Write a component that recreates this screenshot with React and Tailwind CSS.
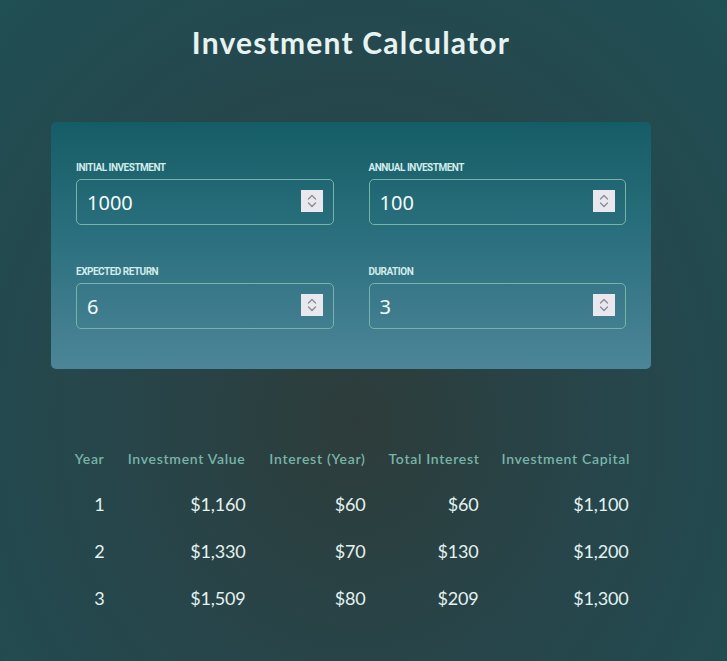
import React from "react";

const fields = [
  { id: "initial", label: "Initial Investment", value: "1000" },
  { id: "annual", label: "Annual Investment", value: "100" },
  { id: "return", label: "Expected Return", value: "6" },
  { id: "duration", label: "Duration", value: "3" },
];

const rows = [
  { year: 1, value: "$1,160", interest: "$60", total: "$60", capital: "$1,100" },
  { year: 2, value: "$1,330", interest: "$70", total: "$130", capital: "$1,200" },
  { year: 3, value: "$1,509", interest: "$80", total: "$209", capital: "$1,300" },
];

function Spinner() {
  return (
    <div className="absolute right-[11px] top-[11px] flex h-[22px] w-[22px] flex-col items-center justify-center bg-[#e9e8ee]">
      <svg width="12" height="16" viewBox="0 0 12 16" fill="none" stroke="#8d8b98" strokeWidth="1.4" strokeLinecap="round" strokeLinejoin="round">
        <path d="M2.5 6 L6 2.5 L9.5 6" />
        <path d="M2.5 10 L6 13.5 L9.5 10" />
      </svg>
    </div>
  );
}

function Field({ label, value }) {
  return (
    <div className="flex flex-col">
      <label className="mb-[5px] font-['Roboto',sans-serif] text-[10px] font-bold uppercase leading-[12px] tracking-[-0.05em] text-[#d2ecea]">
        {label}
      </label>
      <div className="relative">
        <input
          type="text"
          readOnly
          value={value}
          className="h-[46px] w-full rounded-[5px] border border-[#76b4aa] bg-transparent px-[10px] font-['Noto_Sans',sans-serif] text-[20px] text-[#f2fbfb] outline-none"
        />
        <Spinner />
      </div>
    </div>
  );
}

const cell = "text-[18px] leading-[23px] tracking-[-0.01em] text-[#e4f2f0]";

export default function App() {
  return (
    <div className="min-h-[661px] bg-[radial-gradient(ellipse_at_49%_64%,#2d3c3a_0%,#27454a_45%,#1f4f54_100%)] font-['Lato',sans-serif]">
      <div className="flex w-[702px] flex-col items-center">
        <h1 className="pt-[22px] text-[30px] font-bold leading-[40px] tracking-[1.2px] text-[#e7f3f1]">
          Investment Calculator
        </h1>

        {/* inputs card */}
        <section className="mt-[60px] w-[600px] rounded-[5px] bg-[linear-gradient(180deg,#155d66_0%,#2d7180_50%,#4c8598_100%)] px-[25px] pb-[40px] pt-[40px]">
          <div className="grid grid-cols-2 gap-x-[35px] gap-y-[41px]">
            {fields.map((f) => (
              <Field key={f.id} label={f.label} value={f.value} />
            ))}
          </div>
        </section>

        {/* results table */}
        <div className="mt-[79px] grid grid-cols-[31px_118px_97px_90px_127px] gap-x-[23px] text-right">
          {["Year", "Investment Value", "Interest (Year)", "Total Interest", "Investment Capital"].map((h) => (
            <div key={h} className="whitespace-nowrap text-[14px] font-semibold leading-[22px] tracking-[0.7px] text-[#78b5a8]">
              {h}
            </div>
          ))}
          {rows.map((r, i) => {
            const mt = i === 0 ? "mt-[23px]" : "mt-[24px]";
            return (
              <React.Fragment key={r.year}>
                <div className={`${mt} ${cell}`}>{r.year}</div>
                <div className={`${mt} ${cell}`}>{r.value}</div>
                <div className={`${mt} ${cell}`}>{r.interest}</div>
                <div className={`${mt} ${cell}`}>{r.total}</div>
                <div className={`${mt} ${cell}`}>{r.capital}</div>
              </React.Fragment>
            );
          })}
        </div>
      </div>
    </div>
  );
}
